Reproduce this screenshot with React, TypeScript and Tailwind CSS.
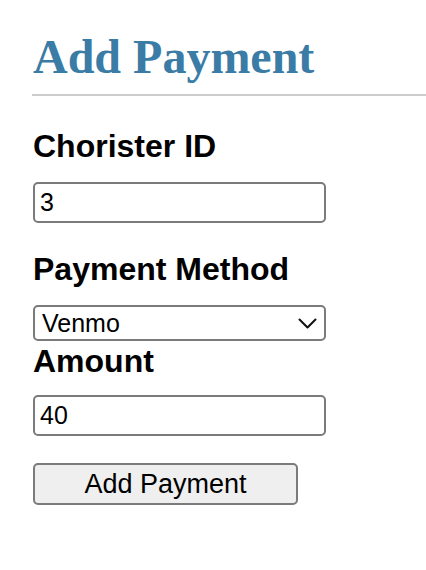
import { useState } from "react";

const labelClass =
  "block h-[32px] text-[32px] leading-none font-bold text-black [font-family:'Liberation_Sans',Arial,sans-serif]";

const fieldClass =
  "block w-[293px] rounded-[5px] border-2 border-[#7b7b7b] bg-white text-[25px] text-black outline-none [font-family:'Liberation_Sans',Arial,sans-serif]";

export default function App() {
  const [choristerId, setChoristerId] = useState("3");
  const [method, setMethod] = useState("Venmo");
  const [amount, setAmount] = useState("40");

  return (
    <div className="min-h-[570px] w-[426px] bg-white pl-[32px]">
      <h1 className="h-[48px] pt-0 text-[48px] leading-none font-bold text-[#3a7ca5] [font-family:'Liberation_Serif','Times_New_Roman',serif] relative top-[33px] pl-px">
        Add Payment
      </h1>
      <div className="mt-[46px] h-[2px] bg-[#cccccc]" />

      <form
        className="flex flex-col pl-px"
        onSubmit={(e) => e.preventDefault()}
      >
        <label className={`${labelClass} mt-[34px]`}>Chorister ID</label>
        <input
          value={choristerId}
          onChange={(e) => setChoristerId(e.target.value)}
          className={`${fieldClass} mt-[20px] h-[41px] px-[5px]`}
        />

        <label className={`${labelClass} mt-[30px]`}>Payment Method</label>
        <div className="relative mt-[20px] w-[293px]">
          <select
            value={method}
            onChange={(e) => setMethod(e.target.value)}
            className={`${fieldClass} h-[36px] appearance-none pl-[7px] pr-8 leading-[32px]`}
          >
            <option>Venmo</option>
            <option>Cash</option>
            <option>Check</option>
            <option>PayPal</option>
          </select>
          <svg
            className="pointer-events-none absolute right-[9px] top-[13px]"
            width="19"
            height="11"
            viewBox="0 0 19 11"
            fill="none"
          >
            <path
              d="M1.5 1.5 L9.5 9.5 L17.5 1.5"
              stroke="#111"
              strokeWidth="2"
              strokeLinecap="round"
              strokeLinejoin="round"
            />
          </svg>
        </div>

        <label className={`${labelClass} mt-[4px]`}>Amount</label>
        <input
          value={amount}
          onChange={(e) => setAmount(e.target.value)}
          className={`${fieldClass} mt-[18px] h-[41px] px-[5px]`}
        />

        <button
          type="submit"
          className="mt-[27px] h-[42px] w-[265px] rounded-[5px] border-2 border-[#7b7b7b] bg-[#efefef] text-[27px] leading-none text-black [font-family:'Liberation_Sans',Arial,sans-serif]"
        >
          Add Payment
        </button>
      </form>
    </div>
  );
}
